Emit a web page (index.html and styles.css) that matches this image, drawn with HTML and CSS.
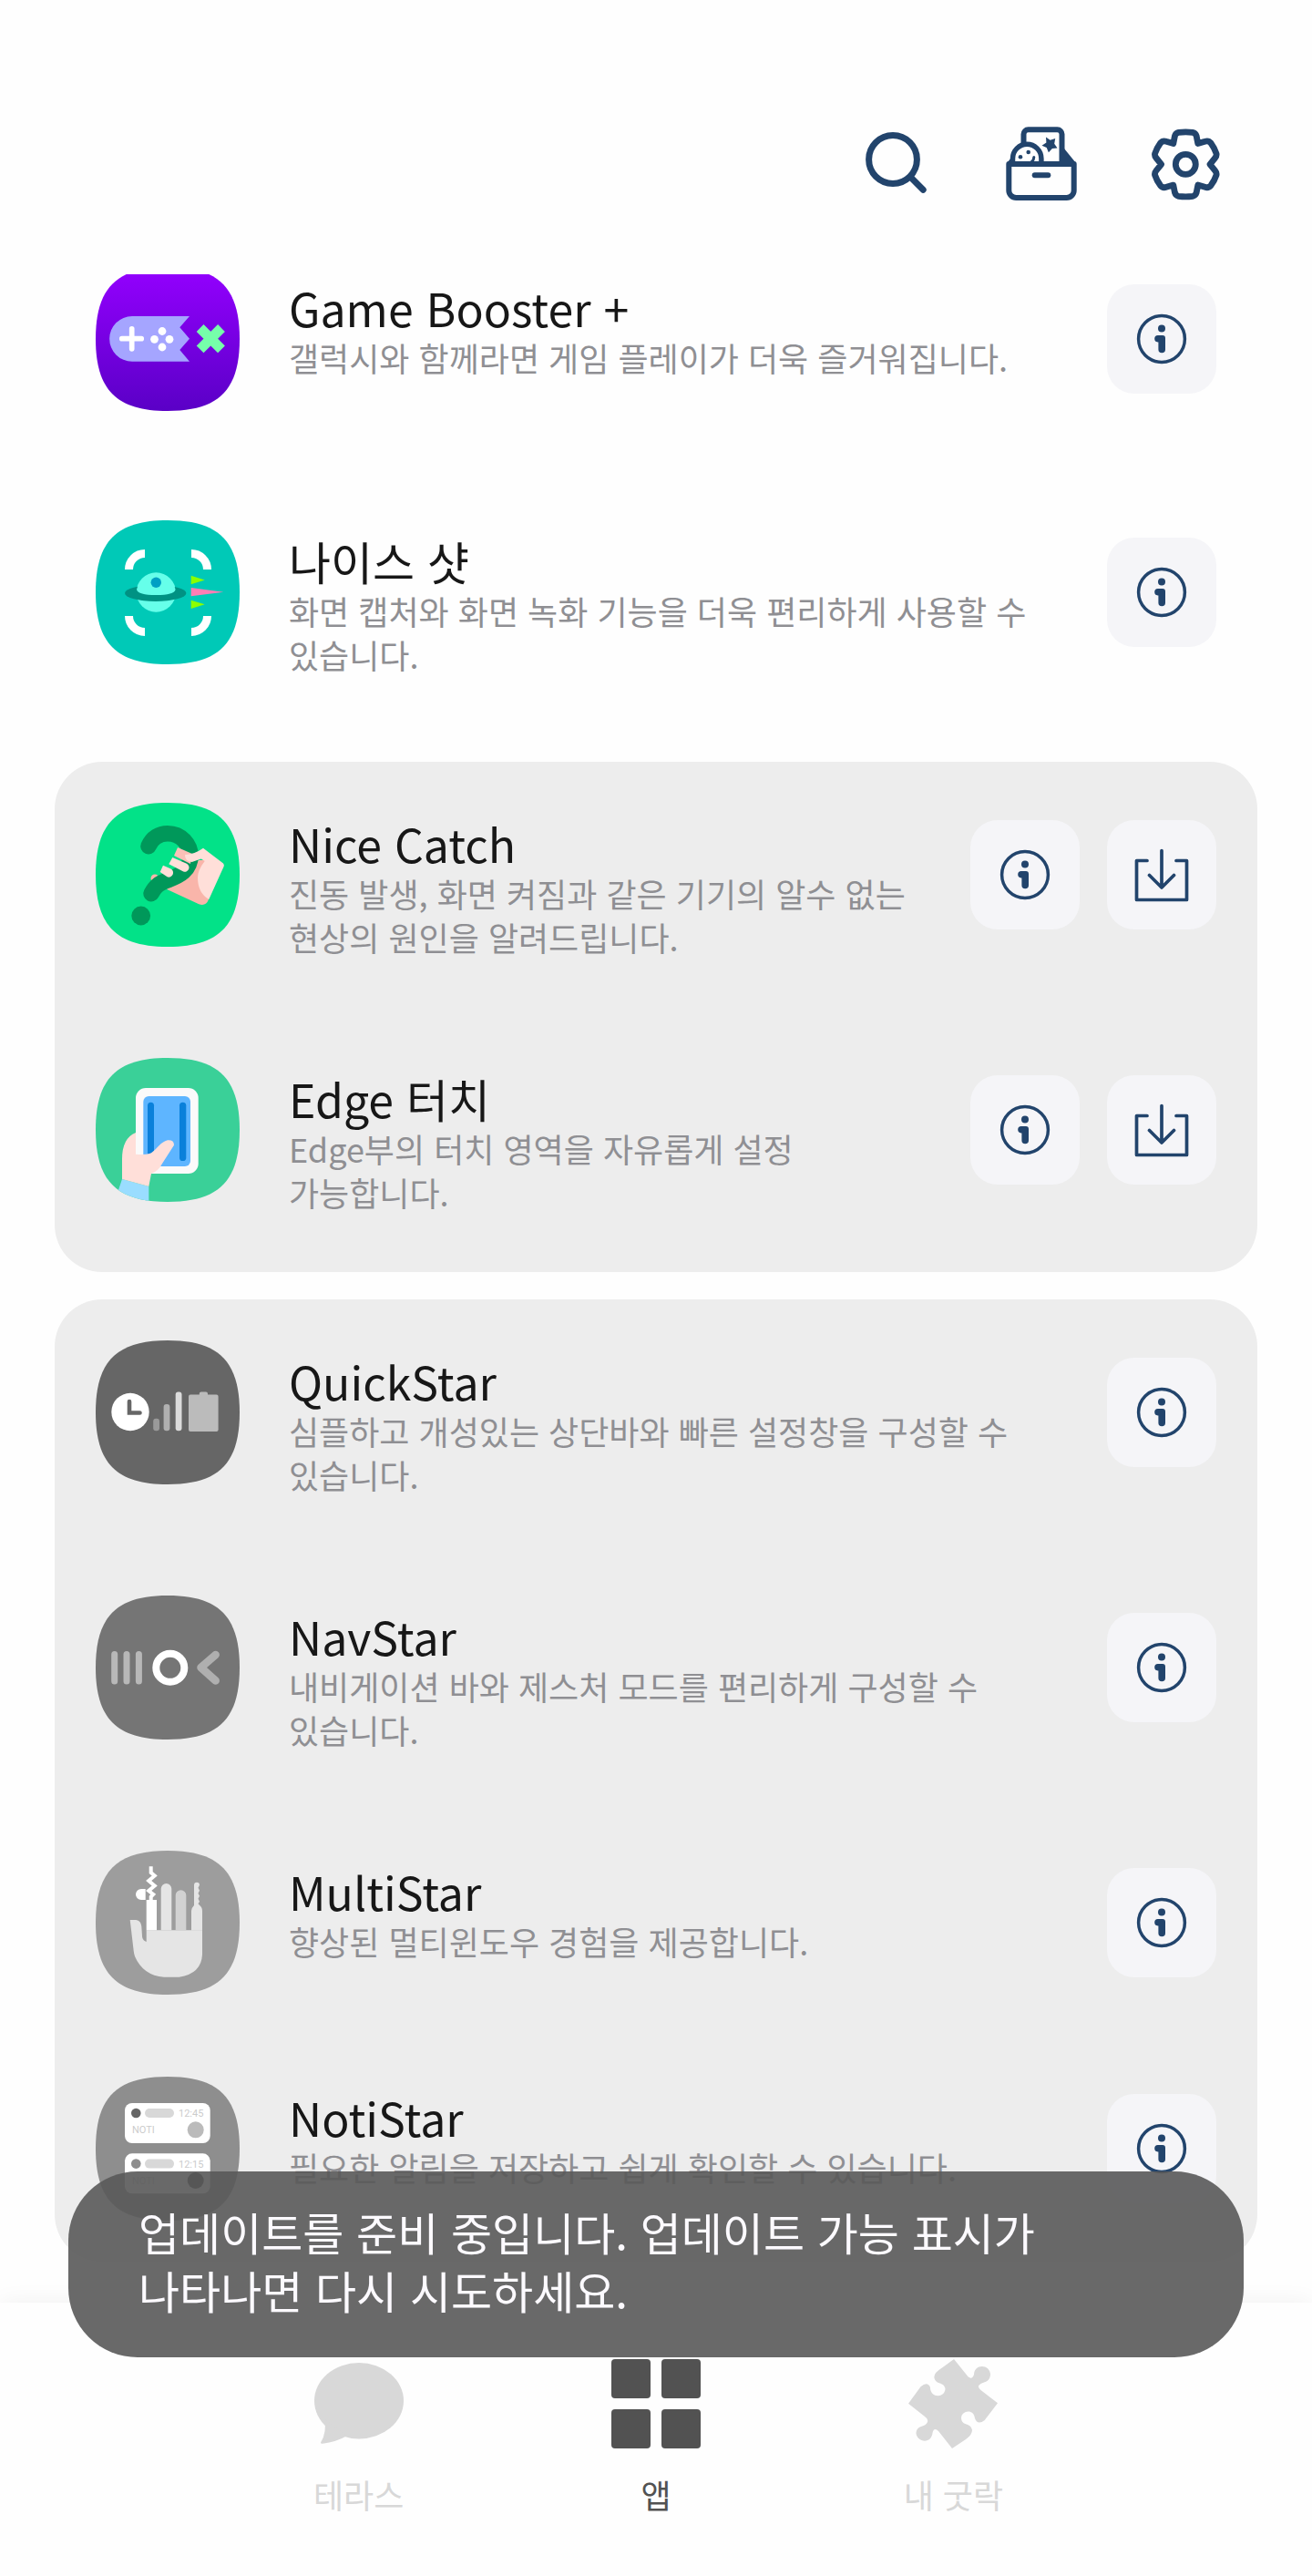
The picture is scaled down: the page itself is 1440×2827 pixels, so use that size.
FILE: index.html
```html
<!DOCTYPE html>
<html lang="ko">
<head>
  <meta charset="UTF-8">
  <meta name="viewport" content="width=device-width, initial-scale=1.0">
  <title>Good Lock</title>
  <link rel="stylesheet" href="styles.css">
</head>
<body>
  <!-- shared shapes -->
  <svg class="defs" width="0" height="0" aria-hidden="true">
    <defs>
      <linearGradient id="purple" x1="0" y1="0" x2="0" y2="1">
        <stop offset="0" stop-color="#9400ff"/>
        <stop offset="1" stop-color="#5a00c6"/>
      </linearGradient>
      <clipPath id="clip"><path d="M79 0C135 0 158 23 158 79S135 158 79 158 0 135 0 79 23 0 79 0z"/></clipPath>
    </defs>
    <symbol id="squircle" viewBox="0 0 158 158">
      <path d="M79 0C135 0 158 23 158 79S135 158 79 158 0 135 0 79 23 0 79 0z"/>
    </symbol>
    <symbol id="info" viewBox="0 0 60 60">
      <circle cx="30" cy="30" r="25.4" fill="none" stroke="currentColor" stroke-width="3.5"/>
      <circle cx="30" cy="18.4" r="4" fill="currentColor"/>
      <path d="M26 26h5a3 3 0 0 1 3 3v12.500a3.800 3.800 0 0 1-7.600 0V33.400h-.6a3.700 3.700 0 0 1 .2-7.400z" fill="currentColor"/>
    </symbol>
    <symbol id="download" viewBox="0 0 60 60">
      <g fill="none" stroke="currentColor" stroke-width="3.7" stroke-linecap="round" stroke-linejoin="round">
        <path d="M30 3.500V43M16.500 30.500L30 44l13.500-13.500"/>
        <path d="M14 14.500H2.500v43h55v-43H46"/>
      </g>
    </symbol>
  </svg>

  <header class="topbar">
    <button type="button" aria-label="검색">
      <svg viewBox="0 0 80 80" fill="none" stroke="currentColor" stroke-width="7" stroke-linecap="round">
        <circle cx="37" cy="35" r="26.400"/>
        <path d="M57 55l13.200 13.200"/>
      </svg>
    </button>
    <button type="button" aria-label="보관함">
      <svg viewBox="0 0 80 80" fill="none" stroke="currentColor" stroke-width="6" stroke-linejoin="round">
        <path d="M5.300 40v29a8 8 0 0 0 8 8h55.400a8 8 0 0 0 8-8V40z"/>
        <path d="M33.700 52.300H48.300" stroke-linecap="round"/>
        <path d="M21.500 19V7.300a5 5 0 0 1 5-5h32a5 5 0 0 1 5 5V38"/>
        <path d="M9.500 38v-4a15.700 15.700 0 0 1 31.400 0v4" stroke-width="5.500"/>
        <path d="M66 23l13 16H66zM3 39l5-6v6z" fill="currentColor" stroke="none"/>
        <path d="M46 10.500l4.600 3.200 5.600-1.800-1 5.900 3.300 4.800-5.600.5-4 4.200-2.200-5.300-5.200-2.200 4.900-3.200z" fill="currentColor" stroke="none"/>
        <circle cx="18" cy="32.300" r="2.300" fill="currentColor" stroke="none"/>
        <circle cx="26.700" cy="27" r="2.300" fill="currentColor" stroke="none"/>
        <path d="M32.800 32.500q0 3-2.500 5" stroke-width="3" stroke-linecap="round"/>
      </svg>
    </button>
    <button type="button" aria-label="설정">
      <svg viewBox="0 0 80 80" fill="none" stroke="currentColor" stroke-width="6.800" stroke-linejoin="round">
        <path d="M26.800 17.500L28.500 9Q29.500 5.800 32.500 5.300Q40.300 4.300 48.100 5.300Q51.100 5.800 52.100 9L53.800 17.500L61.500 15.300Q65.500 14 68 17Q72 22.500 74 28.500Q74.600 31 72.500 33.500L67 40.300L72.500 47.100Q74.600 49.600 74 52.100Q72 58.100 68 63.600Q65.500 66.600 61.500 65.300L53.800 63.100L52.100 71.600Q51.100 74.800 48.100 75.300Q40.300 76.300 32.500 75.300Q29.500 74.800 28.500 71.600L26.800 63.100L19.100 65.300Q15.100 66.600 12.600 63.600Q8.600 58.100 6.600 52.100Q6 49.600 8.100 47.100L13.600 40.300L8.100 33.500Q6 31 6.600 28.500Q8.600 22.500 12.600 17Q15.100 14 19.100 15.300z"/>
        <circle cx="40.300" cy="40.300" r="11"/>
      </svg>
    </button>
  </header>

  <main class="viewport">
    <div class="list">
      <section class="group">
        <article class="app">
          <svg class="app-icon" viewBox="0 0 158 158">
            <use href="#squircle" fill="url(#purple)"/>
            <path d="M40 54h63L92.300 66.300 103 78.700 92.300 91 103 103.700H40a24.850 24.850 0 0 1 0-49.700z" fill="#a5a5ff"/>
            <path d="M28.800 78.700h21.400M39.700 67.800v22" stroke="#fff" stroke-width="5.700" stroke-linecap="round"/>
            <g fill="#fff">
              <circle cx="73" cy="70.500" r="4.400"/><circle cx="73" cy="88" r="4.400"/>
              <circle cx="64.500" cy="79.300" r="4.400"/><circle cx="81" cy="79.300" r="4.400"/>
            </g>
            <path d="M114.600 67l23.400 23.400M138 67l-23.400 23.400" stroke="#76ffaa" stroke-width="11"/>
          </svg>
          <div class="app-text">
            <h2>Game Booster +</h2>
            <p>갤럭시와 함께라면 게임 플레이가 더욱 즐거워집니다.</p>
          </div>
          <div class="actions">
            <button type="button" aria-label="정보"><svg><use href="#info"/></svg></button>
          </div>
        </article>
      </section>

      <section class="group">
        <article class="app">
          <svg class="app-icon" viewBox="0 0 158 158">
            <use href="#squircle" fill="#00c9b7"/>
            <g fill="none" stroke="#fff" stroke-width="9">
              <path d="M36.500 54A17.500 17.500 0 0 1 54 36.500M105 36.500A17.500 17.500 0 0 1 122.500 54M36.500 105A17.500 17.500 0 0 0 54 122.500M105 122.500A17.500 17.500 0 0 0 122.500 105"/>
            </g>
            <circle cx="66.300" cy="79" r="21.700" fill="#66ffea"/>
            <ellipse cx="65.700" cy="80" rx="33.700" ry="9" fill="#009283"/>
            <path d="M45 76A21.700 21.700 0 0 1 87.600 76Q86 82 66.300 82T45 76z" fill="#66ffea"/>
            <circle cx="66.300" cy="68.300" r="5.700" fill="#00a0c4"/>
            <path d="M104.700 60.700l15 4.700-15 4.900zM104.700 87.700l15 4.500-15 4.700z" fill="#8cff00"/>
            <path d="M104.700 74l35.600 4.700-35.600 4.600z" fill="#ff7eb5"/>
          </svg>
          <div class="app-text">
            <h2>나이스 샷</h2>
            <p>화면 캡처와 화면 녹화 기능을 더욱 편리하게 사용할 수 있습니다.</p>
          </div>
          <div class="actions">
            <button type="button" aria-label="정보"><svg><use href="#info"/></svg></button>
          </div>
        </article>
      </section>

      <section class="group filled">
        <article class="app">
          <svg class="app-icon" viewBox="0 0 158 158">
            <use href="#squircle" fill="#02e288"/>
            <circle cx="65" cy="83" r="4.500" fill="#f9b5aa"/>
            <path d="M77.700 94.700L105 74l8-11 9 0 2 43q-3 8-10.700 5.300z" fill="#f9b5aa"/>
            <path d="M58 47.700C62 38 70 33.700 79 33.700C94 33.700 104 46 104 58C104 74 92 80 80 84.500C68 89 65 92 61 99.700" fill="none" stroke="#00985a" stroke-width="17.500" stroke-linecap="round"/>
            <circle cx="49.700" cy="124" r="10.400" fill="#00985a"/>
            <path d="M90 49l16 7-2 11-18-9z" fill="#fbc0b7"/>
            <path d="M84.300 60l15 6.500a4.600 4.600 0 0 1-3 9L80.300 67.300zM74 68.700l8 3.600a4.500 4.500 0 0 1-3.500 9L70.700 76z" fill="#ffdfd9"/>
            <path d="M98 57q10 0 20-7.200L140 66.500q1.500 1.500.6 3.500L124.300 106Q112 99 112 82q0-8 7.700-18l-4-2.400-10 3.400q-8-1-7.700-8z" fill="#ffdfd9"/>
          </svg>
          <div class="app-text">
            <h2>Nice Catch</h2>
            <p>진동 발생, 화면 켜짐과 같은 기기의 알수 없는 현상의 원인을 알려드립니다.</p>
          </div>
          <div class="actions">
            <button type="button" aria-label="정보"><svg><use href="#info"/></svg></button>
            <button type="button" aria-label="다운로드"><svg><use href="#download"/></svg></button>
          </div>
        </article>
        <article class="app">
          <svg class="app-icon" viewBox="0 0 158 158">
            <g clip-path="url(#clip)">
              <rect width="158" height="158" fill="#3ad098"/>
              <rect x="44" y="33" width="68.700" height="94" rx="11" fill="#fafafa"/>
              <rect x="52.300" y="42" width="51.700" height="77" rx="6" fill="#5eb5ff"/>
              <rect x="57" y="48.700" width="7" height="64" rx="3.500" fill="#0a80da"/>
              <rect x="92" y="48.700" width="7.300" height="64.300" rx="3.600" fill="#0a80da"/>
              <path d="M29 133l29.300 8V160H20z" fill="#9addff"/>
              <path d="M44 82v23.700q10 1 16-1 3-1.500 9-8Q75 91 79 90.300q7-.5 7 5.400L73 116q-4 8-12 11l-2.700 14L29 133v-22q0-23 15-29z" fill="#ffdfd9"/>
            </g>
          </svg>
          <div class="app-text">
            <h2>Edge 터치</h2>
            <p>Edge부의 터치 영역을 자유롭게 설정 가능합니다.</p>
          </div>
          <div class="actions">
            <button type="button" aria-label="정보"><svg><use href="#info"/></svg></button>
            <button type="button" aria-label="다운로드"><svg><use href="#download"/></svg></button>
          </div>
        </article>
      </section>

      <section class="group filled">
        <article class="app">
          <svg class="app-icon" viewBox="0 0 158 158">
            <use href="#squircle" fill="#666"/>
            <circle cx="38" cy="78.500" r="20.700" fill="#fff"/>
            <path d="M37 67v12.500h11.500" fill="none" stroke="#666" stroke-width="4.600" stroke-linecap="round"/>
            <rect x="63.200" y="85.700" width="6.800" height="13.600" rx="3" fill="#9a9a9a"/>
            <rect x="74.600" y="70" width="6.800" height="29.300" rx="3" fill="#b0b0b0"/>
            <rect x="87.700" y="56.400" width="6.800" height="42.900" rx="3" fill="#dcdcdc"/>
            <path d="M104 59.600h9.800v-1.200q0-2 2-2h5.200q2 0 2 2v1.200h9.600q2 0 2 2V98q0 2-2 2H104q-2 0-2-2V61.600q0-2 2-2z" fill="#bbb"/>
          </svg>
          <div class="app-text">
            <h2>QuickStar</h2>
            <p>심플하고 개성있는 상단바와 빠른 설정창을 구성할 수 있습니다.</p>
          </div>
          <div class="actions">
            <button type="button" aria-label="정보"><svg><use href="#info"/></svg></button>
          </div>
        </article>
        <article class="app">
          <svg class="app-icon" viewBox="0 0 158 158">
            <use href="#squircle" fill="#757575"/>
            <path d="M20.700 64.500v29.500M34 64.500v29.500M47.400 64.500v29.500" stroke="#b8b8b8" stroke-width="7" stroke-linecap="round"/>
            <circle cx="81.800" cy="79.300" r="15.500" fill="none" stroke="#fff" stroke-width="8"/>
            <path d="M131.700 65L115.500 79l16.200 14.500" fill="none" stroke="#afafaf" stroke-width="8.500" stroke-linecap="round" stroke-linejoin="round"/>
          </svg>
          <div class="app-text">
            <h2>NavStar</h2>
            <p>내비게이션 바와 제스처 모드를 편리하게 구성할 수 있습니다.</p>
          </div>
          <div class="actions">
            <button type="button" aria-label="정보"><svg><use href="#info"/></svg></button>
          </div>
        </article>
        <article class="app">
          <svg class="app-icon" viewBox="0 0 158 158">
            <use href="#squircle" fill="#9d9d9d"/>
            <path d="M37.700 76h6.600q5.500 1 6 7l.8 12q1 4 4.600 5V87.300h61.300V114q-1 21-25.300 24.700H75Q52 137 43 116q-1-3-1.300-6z" fill="#e5e5e5"/>
            <path d="M55.700 54H67v33.300H55.700zM54.700 54H50a6 6 0 0 1 0-12h4.700z" fill="#fff"/>
            <path d="M60.700 17.300V24l4 3.500-6.500 5.500 6.500 5.500-6.500 5.500 5 4-2.500 2.500V54" fill="none" stroke="#fff" stroke-width="4"/>
            <path d="M71.700 87.300V41.800a5.800 5.800 0 0 1 11.600 0v45.500z" fill="#e5e5e5"/>
            <path d="M87.700 87.300V49.100a5.800 5.800 0 0 1 11.600 0v38.200z" fill="#d2d2d2"/>
            <path d="M105 87.500V66q0-3 3-6V37.700a3 3 0 0 1 6 0l-1.500 3 1.500 3-1.500 3 1.500 3-1.500 3 1.500 3-1.500 2.500L116 62q1 2 1 4v21.500z" fill="#e5e5e5"/>
          </svg>
          <div class="app-text">
            <h2>MultiStar</h2>
            <p>향상된 멀티윈도우 경험을 제공합니다.</p>
          </div>
          <div class="actions">
            <button type="button" aria-label="정보"><svg><use href="#info"/></svg></button>
          </div>
        </article>
        <article class="app">
          <svg class="app-icon noti" viewBox="0 0 158 158">
            <use href="#squircle" fill="#8e8e8e"/>
            <rect x="32" y="29" width="93.700" height="44" rx="8" fill="#fff"/>
            <circle cx="44.300" cy="40" r="5.300" fill="#666"/>
            <rect x="54" y="35" width="32" height="10" rx="5" fill="#d8d8d8"/>
            <text x="91" y="44">12:45</text>
            <text x="40" y="62">NOTI</text>
            <circle cx="109.700" cy="58.300" r="9" fill="#bbb"/>
            <rect x="32" y="84.300" width="93.700" height="44" rx="8" fill="#fff"/>
            <circle cx="44.300" cy="95.600" r="5.300" fill="#8e8e8e"/>
            <rect x="54" y="90.600" width="32" height="10" rx="5" fill="#d8d8d8"/>
            <text x="91" y="100">12:15</text>
            <text x="40" y="118">NOTI</text>
            <circle cx="109.700" cy="114" r="9" fill="#444"/>
          </svg>
          <div class="app-text">
            <h2>NotiStar</h2>
            <p>필요한 알림을 저장하고 쉽게 확인할 수 있습니다.</p>
          </div>
          <div class="actions">
            <button type="button" aria-label="정보"><svg><use href="#info"/></svg></button>
          </div>
        </article>
      </section>
    </div>
  </main>

  <nav class="tabs">
    <ul>
      <li>
        <a href="#terrace">
          <svg viewBox="0 0 98 98" fill="currentColor">
            <ellipse cx="49" cy="45.700" rx="49" ry="41.700"/>
            <path d="M11 66q3 14-4 25.500 0 1.500 2 1.200Q24 91 36 84z"/>
          </svg>
          <span>테라스</span>
        </a>
      </li>
      <li>
        <a href="#apps" class="active" aria-current="page">
          <svg viewBox="0 0 98 98" fill="currentColor">
            <rect width="43" height="43" rx="4"/><rect x="55" width="43" height="43" rx="4"/>
            <rect y="55" width="43" height="43" rx="4"/><rect x="55" y="55" width="43" height="43" rx="4"/>
          </svg>
          <span>앱</span>
        </a>
      </li>
      <li>
        <a href="#mine">
          <svg viewBox="0 0 98 98" fill="currentColor">
            <path d="M50 0L65.500 19.300Q70 23 72 17C72.500 4 90 6 90 17C89 27 81 24 77 29.300Q76.500 32 79.800 34.300L98 48.300L83.700 67Q76 73 73 65C72 54 58 56 58 65C59 74 68 69 70 77.700Q70 83 63.400 87.700L48 98L33.200 79.300Q28 74 26.500 81C25 94 9 91 8.500 81C10 71 18 76 21 69Q22 66 18 63L0 48.700L13.500 30.300Q21 24 24 31C24 43 40 43 40.500 32.500C39 24 30 29 28.300 20Q28 15 37 9.500z"/>
          </svg>
          <span>내 굿락</span>
        </a>
      </li>
    </ul>
  </nav>

  <div class="toast" role="status">업데이트를 준비 중입니다. 업데이트 가능 표시가 나타나면 다시 시도하세요.</div>
</body>
</html>
```
FILE: styles.css
```css
* {
  box-sizing: border-box;
}
body {
  margin: 0;
  min-height: 100vh;
  display: flex;
  flex-direction: column;
  background: #fefefe;
  color: #171717;
  font-family: "Noto Sans CJK KR", "Noto Sans", sans-serif;
  font-weight: 400;
  word-break: keep-all;
}
button {
  border: none;
  padding: 0;
  background: none;
  color: #22446c;
  cursor: pointer;
}
svg {
  display: block;
}
.defs {
  position: absolute;
}

/* top icons */
.topbar {
  display: flex;
  justify-content: flex-end;
  gap: 79px;
  padding: 140px 99px 81px;
}
.topbar svg {
  width: 80px;
  height: 80px;
  overflow: visible;
}

/* app list, scrolled a little under the top bar */
.viewport {
  flex: 1;
  overflow: hidden;
  padding: 0 60px 45px;
}
.list {
  display: flex;
  flex-direction: column;
  gap: 30px;
  margin-top: -53px;
}
.group {
  border-radius: 52px;
}
.filled {
  background: #ededed;
}
.app {
  display: flex;
  align-items: flex-start;
  padding: 45px;
}
.app-icon {
  flex: none;
  width: 158px;
  height: 158px;
}
.app-text {
  flex: 1;
  padding: 13px 30px 19px 54px;
}
.app-text h2 {
  margin: 0;
  font-size: 50px;
  font-weight: 400;
  line-height: 62px;
}
.app-text p {
  margin: 0;
  font-size: 36px;
  line-height: 48px;
  color: #8f8f93;
}
.actions {
  display: flex;
  gap: 30px;
  padding-top: 19px;
}
.actions button {
  display: grid;
  place-items: center;
  width: 120px;
  height: 120px;
  border-radius: 30px;
  background: #f5f5f8;
}
.actions svg {
  width: 60px;
  height: 60px;
}
.noti text {
  font-family: Roboto, sans-serif;
  font-size: 11px;
  fill: #ccc;
}

/* bottom tabs */
.tabs {
  padding: 62px 0 64px;
  background: #fefefe;
  box-shadow: 0 0 24px rgba(0, 0, 0, 0.06);
  clip-path: inset(-24px 0 0 0);
}
.tabs ul {
  display: grid;
  grid-template-columns: repeat(3, 1fr);
  width: 68%;
  margin: 0 auto;
  padding: 0;
  list-style: none;
}
.tabs a {
  display: flex;
  flex-direction: column;
  align-items: center;
  gap: 24px;
  font-size: 36px;
  line-height: 52px;
  color: #d8d8d8;
  text-decoration: none;
}
.tabs .active {
  color: #525252;
}
.tabs svg {
  width: 98px;
  height: 98px;
}

.toast {
  position: fixed;
  left: 75px;
  right: 75px;
  bottom: 240px;
  padding: 34px 77px 42px;
  border-radius: 76px;
  background: rgba(89, 89, 89, 0.9);
  color: #fcfaff;
  font-size: 49px;
  line-height: 64px;
}
```
